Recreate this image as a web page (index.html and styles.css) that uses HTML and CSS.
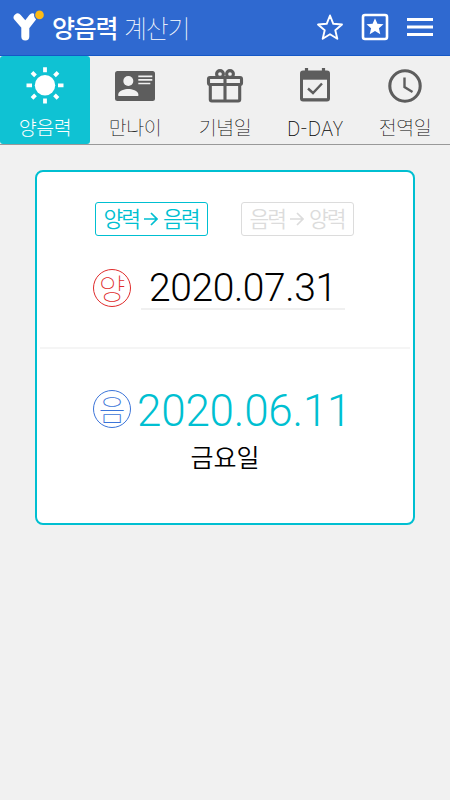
FILE: index.html
```html
<!DOCTYPE html>
<html lang="ko">
<head>
<meta charset="utf-8">
<meta name="viewport" content="width=device-width, initial-scale=1">
<title>양음력 계산기</title>
<link rel="stylesheet" href="styles.css">
</head>
<body>
<header class="topbar">
  <svg class="logo" width="34" height="34" viewBox="0 0 34 34"><path d="M5.700 8.500l7.800 9L20.500 8.500M13.300 17v10.500" fill="none" stroke="#fff" stroke-width="8" stroke-linecap="round" stroke-linejoin="round"/><circle cx="27.500" cy="5.900" r="5.500" fill="#2f69d0"/><circle cx="27.500" cy="5.900" r="4.300" fill="#fdbb16"/></svg>
  <h1 class="title"><b>양음력</b><span>계산기</span></h1>
  <div class="actions">
    <svg width="26" height="26" viewBox="0 0 26 26"><path d="M13 1.500l3.300 8.300 8.700.7-6.700 5.800 2 8.500-7.300-4.500-7.300 4.500 2-8.500L1 10.500l8.700-.7z" fill="none" stroke="#fff" stroke-width="1.900" stroke-linejoin="round"/></svg>
    <svg width="28" height="28" viewBox="0 0 28 28"><rect x="2" y="2" width="24" height="24" rx="2" fill="none" stroke="#fff" stroke-width="2.600"/><path d="M14 5.200l2.400 5.600 6.100.5-4.600 4 1.400 6-5.300-3.200-5.300 3.200 1.400-6-4.600-4 6.100-.5z" fill="#fff"/></svg>
    <svg width="26" height="20" viewBox="0 0 26 20"><path d="M0 2.500h26M0 10h26M0 17.500h26" stroke="#fff" stroke-width="2.900"/></svg>
  </div>
</header>
<nav class="tabs">
  <a class="tab active">
    <svg width="40" height="40" viewBox="0 0 40 40"><circle cx="20" cy="20.300" r="10.200" fill="#fff"/><path d="M20 2.300v5M20 33.600v5M1.500 20.300h5.500M33 20.300h5.500M7 7.300l3.500 3.500M29.500 29.800l3.500 3.500M7 33.300l3.500-3.500M29.500 10.800L33 7.300" stroke="#fff" stroke-width="3.800"/></svg>
    <span>양음력</span>
  </a>
  <a class="tab">
    <svg width="40" height="40" viewBox="0 0 40 40"><rect y="6" width="40" height="30" rx="2.500" fill="#5d5d5d"/><circle cx="13.300" cy="16" r="5" fill="#f0f0f0"/><path d="M3.300 31v-1.700c0-3.300 6.700-5.200 10-5.200s10 1.900 10 5.200V31z" fill="#f0f0f0"/><path d="M23.300 11.300h14M23.300 14.900h14M23.300 18.500h12" stroke="#f0f0f0" stroke-width="1.700"/></svg>
    <span>만나이</span>
  </a>
  <a class="tab">
    <svg width="40" height="40" viewBox="0 0 40 40" fill="none" stroke="#5d5d5d" stroke-width="3.100"><path d="M5.300 19v15.500q0 1.500 1.500 1.500h26.400q1.500 0 1.500-1.500V19M20 12.500V36"/><rect x="3.500" y="12.500" width="33" height="7" rx="1.500"/><circle cx="15" cy="9" r="3.400"/><circle cx="25" cy="9" r="3.400"/></svg>
    <span>기념일</span>
  </a>
  <a class="tab">
    <svg width="40" height="40" viewBox="0 0 40 40"><path d="M8 5.500h24q3 0 3 3v25q0 3-3 3H8q-3 0-3-3v-25q0-3 3-3z" fill="#5d5d5d"/><path d="M8 14.700h24v18.500H8z" fill="#f0f0f0"/><path d="M11.500 3v5M28.500 3v5" stroke="#5d5d5d" stroke-width="3.200"/><path d="M13 23.500l5 4.500 9-9.500" fill="none" stroke="#5d5d5d" stroke-width="2.400"/></svg>
    <span class="latin">D-DAY</span>
  </a>
  <a class="tab">
    <svg width="40" height="40" viewBox="0 0 40 40" fill="none" stroke="#5d5d5d"><circle cx="20" cy="21" r="15.200" stroke-width="3.100"/><path d="M19.500 12.500v9.500l8 5" stroke-width="2.400"/></svg>
    <span>전역일</span>
  </a>
</nav>
<main class="card">
  <section class="source">
    <div class="modes">
      <button class="mode on"><span>양력</span><svg width="14" height="14" viewBox="0 0 14 14"><path d="M0 7h13M7 1l6 6-6 6"/></svg><span>음력</span></button>
      <button class="mode"><span>음력</span><svg width="14" height="14" viewBox="0 0 14 14"><path d="M0 7h13M7 1l6 6-6 6"/></svg><span>양력</span></button>
    </div>
    <div class="row">
      <span class="mark solar">양</span>
      <div class="date input">2020.07.31</div>
    </div>
  </section>
  <section class="result">
    <div class="row">
      <span class="mark lunar">음</span>
      <div class="date output">2020.06.11</div>
    </div>
    <p class="weekday">금요일</p>
  </section>
</main>
</body>
</html>
```

FILE: styles.css
```css
* { box-sizing: border-box; }
body {
  margin: 0;
  height: 800px;
  overflow: hidden;
  background: #f1f1f1;
  color: #000;
  font-family: Roboto, "Noto Sans CJK KR", sans-serif;
}
svg { display: block; flex: none; }
.topbar {
  display: flex;
  align-items: center;
  height: 56px;
  padding: 0 17px 2px 12px;
  background: #2f69d0;
  border-bottom: 1px solid #1558c6;
  color: #fff;
}
.logo { margin-bottom: 2px; }
.title {
  display: flex;
  gap: 7px;
  margin: 0 0 0 6px;
  font-family: "Noto Sans CJK KR", sans-serif;
  font-size: 25px;
  line-height: 36px;
  letter-spacing: -1.300px;
  font-weight: 300;
  white-space: nowrap;
}
.title b { font-weight: 500; }
.title span { font-weight: 100; }
.actions { display: flex; align-items: center; gap: 18px; margin-left: auto; }
.tabs {
  display: flex;
  height: 89px;
  background: #f0f0f0;
  border-bottom: 1px solid #999;
}
.tab {
  display: flex;
  flex: 1;
  flex-direction: column;
  align-items: center;
  padding-top: 9px;
  font-family: "Noto Sans CJK KR", sans-serif;
  font-size: 19.500px;
  line-height: 28px;
  letter-spacing: -.5px;
  font-weight: 100;
}
.tab span { margin-top: 8px; }
.tab .latin { font-size: 20.500px; letter-spacing: .3px; }
.active { background: #0fc2d3; border-radius: 3px; color: #fff; font-weight: 300; }
.card {
  width: 380px;
  height: 355px;
  margin: 25px 0 0 35px;
  border: 2px solid #00bfd1;
  border-radius: 8px;
  background: #fff;
}
.source {
  height: 177px;
  margin: 0 3px;
  padding-top: 30px;
  border-bottom: 2px solid #f5f5f5;
}
.modes { display: flex; gap: 33px; padding-left: 55px; }
.mode {
  display: flex;
  align-items: center;
  justify-content: center;
  gap: 5px;
  width: 113px;
  height: 34px;
  padding: 0 1px 2px 0;
  border: 1px solid #dcdcdc;
  border-radius: 3px;
  background: #fff;
  color: #dcdcdc;
  font-family: "Noto Sans CJK KR", sans-serif;
  font-size: 21.500px;
  line-height: 30px;
  letter-spacing: -2px;
  font-weight: 350;
}
.mode svg { fill: none; stroke: currentColor; stroke-width: 1.700; margin-top: 2px; }
.on { border-color: #00bfd1; color: #00bfd1; }
.row { display: flex; align-items: center; }
.source .row { margin: 30px 0 0 53px; }
.mark {
  display: flex;
  align-items: center;
  justify-content: center;
  flex: none;
  width: 38px;
  height: 38px;
  padding-bottom: 3px;
  border: 1px solid;
  border-radius: 50%;
  font-family: "Noto Sans CJK KR", sans-serif;
  font-size: 29px;
  line-height: 34px;
  font-weight: 100;
}
.solar { color: #e02b2b; }
.lunar { color: #3b74d9; }
.date { font-weight: 300; white-space: nowrap; }
.input {
  width: 204px;
  height: 44px;
  margin-left: 10px;
  padding-left: 8px;
  border-bottom: 2px solid #f0f0f0;
  font-size: 39px;
  line-height: 44px;
  letter-spacing: -.4px;
}
.result { padding-top: 38px; }
.result .row { height: 44px; padding-left: 56px; }
.output {
  margin: 3px 0 0 6px;
  color: #00bfd1;
  font-size: 44px;
  line-height: 44px;
  letter-spacing: -.2px;
}
.weekday {
  margin: 7px 0 0;
  text-align: center;
  font-family: "Noto Sans CJK KR", sans-serif;
  font-size: 25px;
  line-height: 36px;
  font-weight: 350;
}
```
